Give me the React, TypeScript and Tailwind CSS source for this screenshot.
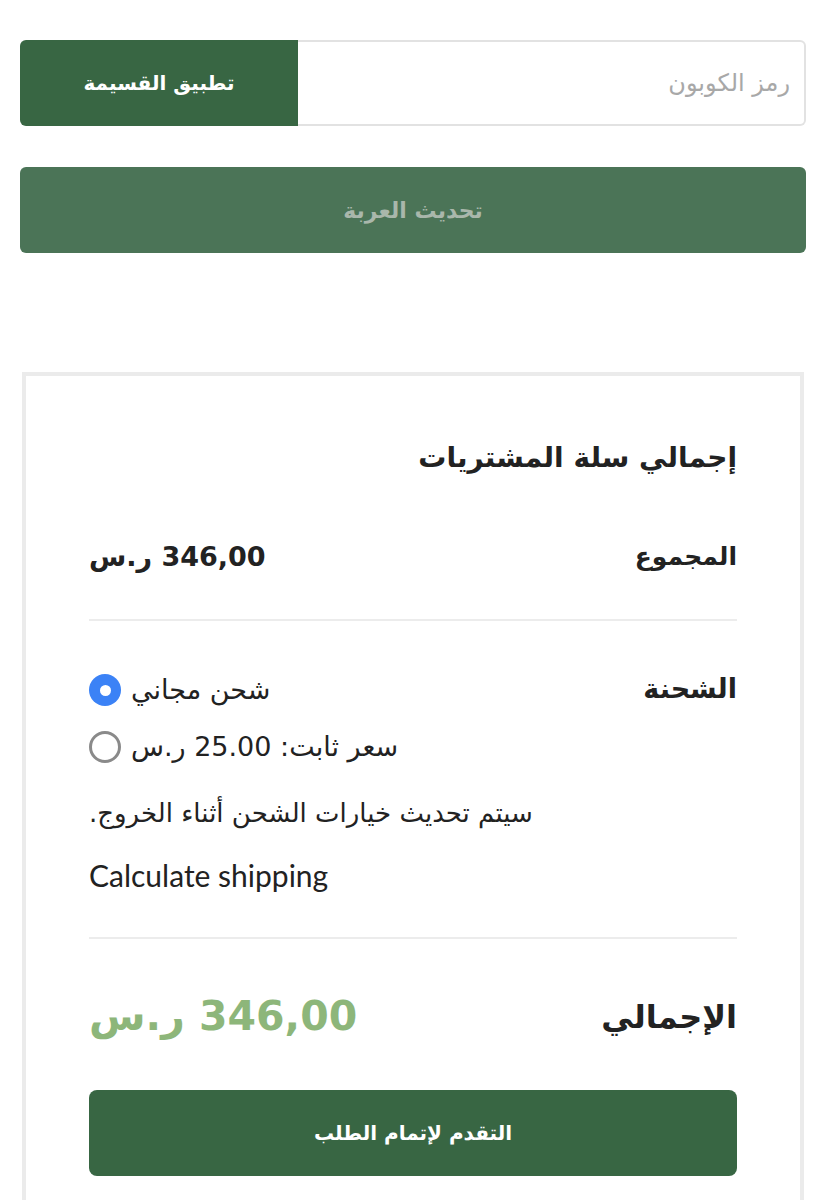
import React from 'react';

const font = { fontFamily: '"DejaVu Sans", sans-serif' };

function Radio({ checked }: { checked: boolean }) {
  if (checked) {
    return (
      <span className="inline-flex items-center justify-center w-[32px] h-[32px] rounded-full bg-[#3b82f6] shrink-0">
        <span className="w-[11px] h-[11px] rounded-full bg-white" />
      </span>
    );
  }
  return <span className="inline-block w-[32px] h-[32px] rounded-full border-[3px] border-[#8a8a8a] bg-white shrink-0" />;
}

export default function App() {
  return (
    <div dir="rtl" style={font} className="w-[826px] min-h-[1200px] bg-white pt-[40px] px-[20px] text-[#222]">
      {/* coupon */}
      <div className="flex h-[86px]">
        <div className="flex-1 flex items-center pr-[14px] text-[24px] text-[#a8a8a8] border-2 border-l-0 border-[#e2e2e2] rounded-r-[6px]">
          رمز الكوبون
        </div>
        <button className="w-[278px] h-full rounded-l-[6px] bg-[#386643] text-white text-[20px] font-bold">
          تطبيق القسيمة
        </button>
      </div>

      <button className="mt-[41px] w-full h-[86px] rounded-[6px] bg-[#4b7457] text-[#a9b7ab] text-[22px] font-bold">
        تحديث العربة
      </button>

      {/* cart totals */}
      <div className="mt-[119px] mx-[2px] border-[4px] border-[#ebebeb] px-[63px] pt-[62px] pb-[40px]">
        <h2 className="text-[28px] font-bold leading-[40px]">إجمالي سلة المشتريات</h2>

        <div className="mt-[59px] flex items-center justify-between h-[40px]">
          <span className="text-[25px] font-bold">المجموع</span>
          <span className="text-[27px] font-bold">346,00 ر.س</span>
        </div>

        <div className="mt-[42px] h-[2px] bg-[#ececec]" />

        <div className="mt-[51px] flex justify-between">
          <span className="text-[27px] font-bold leading-[34px]">الشحنة</span>
          <div className="flex flex-col items-end text-[27px]">
            <div className="flex items-center gap-[10px] h-[36px]">
              <span>شحن مجاني</span>
              <Radio checked />
            </div>
            <div className="mt-[21px] flex items-center gap-[10px] h-[36px]">
              <span>
                سعر ثابت: <span dir="ltr">25.00</span> ر.س
              </span>
              <Radio checked={false} />
            </div>
          </div>
        </div>

        <p className="mt-[30px] text-[26px] text-left leading-[36px]">
          <span className="inline-block text-right">سيتم تحديث خيارات الشحن أثناء الخروج.</span>
        </p>
        <p dir="ltr" className="mt-[26px] text-[30px] leading-[36px] text-[#222]" style={{ fontFamily: '"Lato", sans-serif' }}>
          Calculate shipping
        </p>

        <div className="mt-[44px] h-[2px] bg-[#ececec]" />

        <div className="mt-[53px] flex items-center justify-between h-[50px]">
          <span className="text-[32px] font-bold">الإجمالي</span>
          <span className="text-[41px] font-bold tracking-[2px] text-[#8db67a]">346,00 ر.س</span>
        </div>

        <button className="mt-[48px] w-full h-[86px] rounded-[8px] bg-[#386643] text-white text-[20px] font-bold">
          التقدم لإتمام الطلب
        </button>
      </div>
    </div>
  );
}
